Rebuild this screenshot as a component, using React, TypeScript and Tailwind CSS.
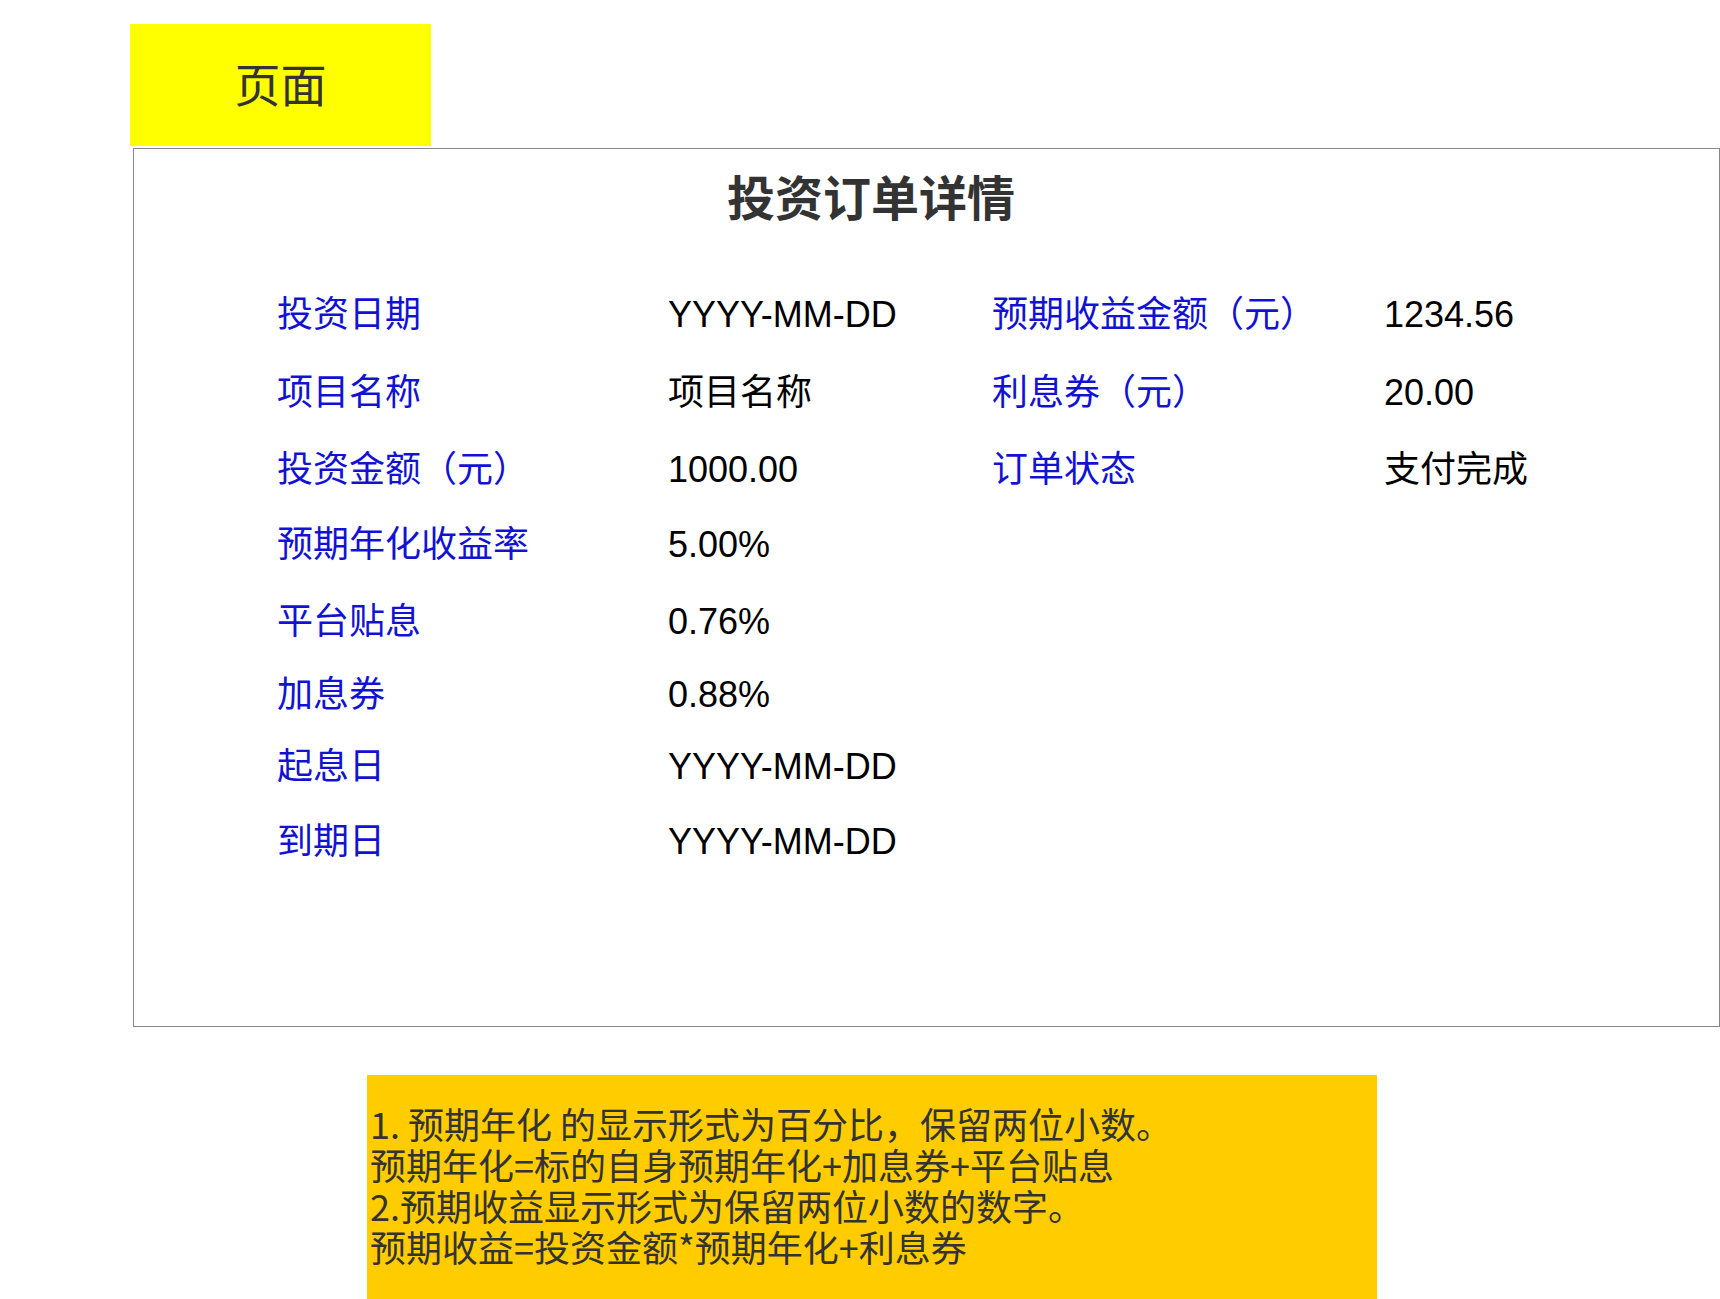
const font = "font-['Liberation_Sans','Noto_Sans_CJK_SC',sans-serif]";

type Row = { label: string; value: string; label2?: string; value2?: string };

const rows: Row[] = [
  { label: "投资日期", value: "YYYY-MM-DD", label2: "预期收益金额（元）", value2: "1234.56" },
  { label: "项目名称", value: "项目名称", label2: "利息券（元）", value2: "20.00" },
  { label: "投资金额（元）", value: "1000.00", label2: "订单状态", value2: "支付完成" },
  { label: "预期年化收益率", value: "5.00%" },
  { label: "平台贴息", value: "0.76%" },
  { label: "加息券", value: "0.88%" },
  { label: "起息日", value: "YYYY-MM-DD" },
  { label: "到期日", value: "YYYY-MM-DD" },
];

export default function App() {
  return (
    <div className={`min-h-[1299px] w-[1720px] overflow-hidden bg-white ${font}`}>
      <div className="ml-[130px] mt-[24px] flex h-[122px] w-[301px] items-center justify-center bg-[#ffff00]">
        <span className="mt-[2px] text-[46px] leading-none text-[#333333]">页面</span>
      </div>

      <div className="ml-[133px] mt-[2px] h-[879px] w-[1587px] border border-[#888888] bg-white">
        <h1 className="ml-[593px] mt-[27px] text-[48px] font-bold leading-[48px] text-[#333333]">
          投资订单详情
        </h1>

        <div className="ml-[143px] mt-[53px] grid grid-cols-[391px_324px_392px_1fr] grid-rows-[76px_80px_74px_76px_78px_68px_76px_74px] text-[36px]">
          {rows.map((r) => (
            <div key={r.label} className="contents">
              <div className="flex items-center text-[#1212d4]">{r.label}</div>
              <div className="flex items-center text-black">{r.value}</div>
              <div className="flex items-center text-[#1212d4]">{r.label2 ?? ""}</div>
              <div className="flex items-center text-black">{r.value2 ?? ""}</div>
            </div>
          ))}
        </div>
      </div>

      <div className="ml-[367px] mt-[48px] h-[224px] w-[1010px] bg-[#ffcc00] pl-[3px] pt-[28px] text-[36px] leading-[41px] text-[#333333] font-['Noto_Sans_CJK_SC',sans-serif]">
        <p>1. 预期年化 的显示形式为百分比，保留两位小数。</p>
        <p>预期年化=标的自身预期年化+加息券+平台贴息</p>
        <p>2.预期收益显示形式为保留两位小数的数字。</p>
        <p>预期收益=投资金额*预期年化+利息券</p>
      </div>
    </div>
  );
}
